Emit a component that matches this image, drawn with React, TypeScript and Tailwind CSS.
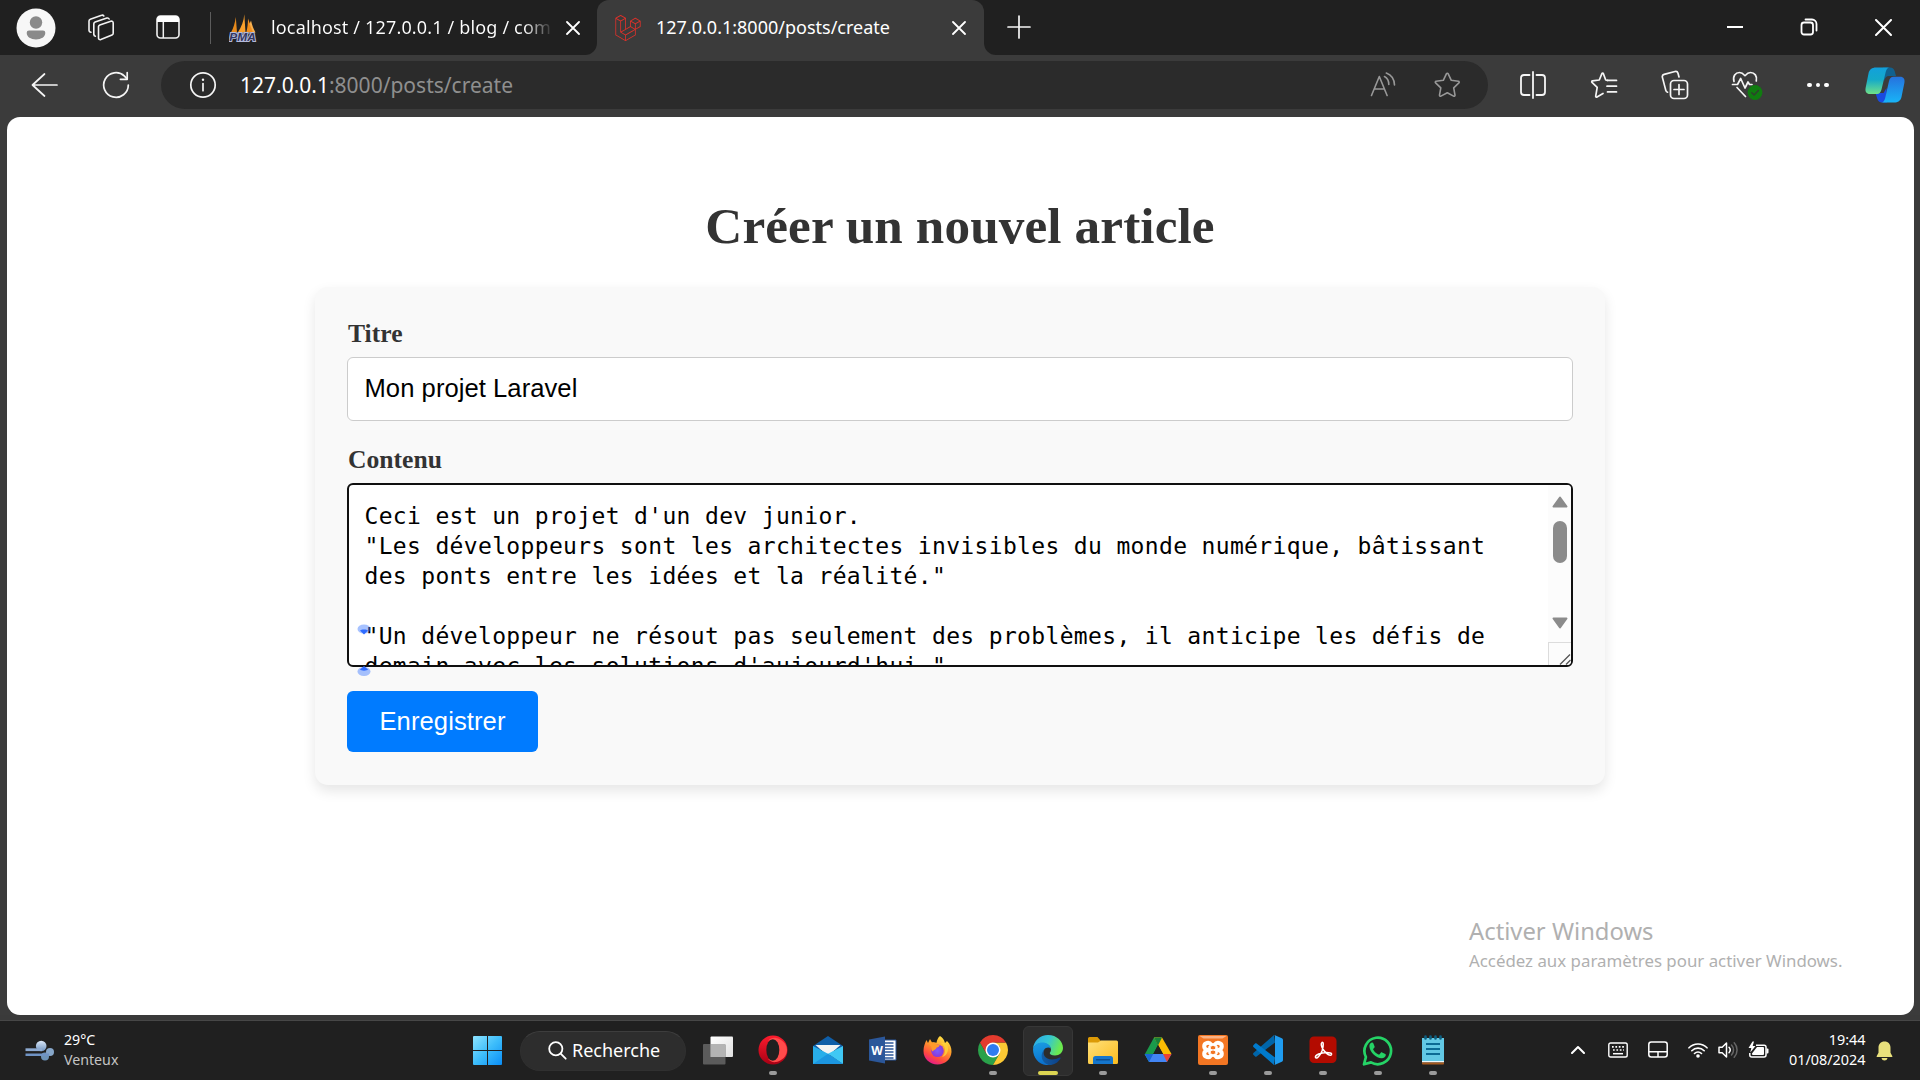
import type { ReactNode } from 'react';
import { SiLaravel } from 'react-icons/si';

const ui = "font-['Noto_Sans','Open_Sans',sans-serif]";

function Slot({ className, children }: { className: string; children: ReactNode }) {
  return <div className={`flex shrink-0 items-center justify-center ${className}`}>{children}</div>;
}

/* ---------- Browser icons ---------- */

const Avatar = () => (
  <svg width="40" height="40" viewBox="0 0 40 40">
    <circle cx="20" cy="20" r="19.5" fill="#f7f7f7" />
    <circle cx="20" cy="14.5" r="6.2" fill="#8a8a8a" />
    <path d="M13 22.5h14a2.3 2.3 0 0 1 2.3 2.3c0 4.200-4 6.600-9.300 6.600s-9.300-2.400-9.300-6.600A2.300 2.300 0 0 1 13 22.500z" fill="#8a8a8a" />
  </svg>
);

const Workspaces = () => (
  <svg width="28" height="28" viewBox="0 0 28 28" fill="none" stroke="#f2f2f2" strokeWidth="1.6" strokeLinejoin="round" strokeLinecap="round">
    <path d="M11.500 12.600a2 2 0 0 1 1.300-1.700l11-3.700a1.800 1.800 0 0 1 2.400 1.700v10.300a2 2 0 0 1-1.200 1.800l-11.200 4.600a1.700 1.700 0 0 1-2.300-1.600z" />
    <path d="M8.400 22.200a1.900 1.900 0 0 1-1.600-1.800V9.900a2 2 0 0 1 1.300-1.800l11.800-4a1.800 1.800 0 0 1 2.200.9" />
    <path d="M4 18.200a1.900 1.900 0 0 1-2-1.900V7a2 2 0 0 1 1.300-1.800L14.600 1.300a1.800 1.800 0 0 1 2.200.7" />
  </svg>
);

const TabActions = () => (
  <svg width="24" height="24" viewBox="0 0 24 24" fill="none">
    <rect x="1" y="1" width="22" height="22" rx="3.500" stroke="#f2f2f2" strokeWidth="1.600" />
    <path d="M1 7V4.500A3.500 3.500 0 0 1 4.500 1h15A3.500 3.500 0 0 1 23 4.500V7z" fill="#fff" />
    <path d="M7.300 7v16" stroke="#f2f2f2" strokeWidth="1.500" />
  </svg>
);

const PhpMyAdmin = () => (
  <svg width="28" height="28" viewBox="0 0 28 28">
    <path d="M2 18.500C4.500 14 6 9 6.800 3L8 18.500z" fill="#e88b1c" />
    <path d="M8.800 18.500C12.500 13 14.800 7 15.300 0.300L16.500 18.500z" fill="#f9a02c" />
    <path d="M17.300 18.500C18.500 14 19 9 19 4.500c2 5 3.500 9.500 5.500 14z" fill="#f28d1a" />
    <path d="M20.500 10 22 6.500c1 4.500 2.500 8.500 4.500 12h-2.500z" fill="#f9b04e" />
    <path d="M1 18.400h25l-2 1.200H2z" fill="#b5bdd6" />
    <text x="0.300" y="27" fontSize="10.500" fontStyle="italic" fontWeight="bold" fontFamily="Liberation Sans, sans-serif" textLength="26.500" lengthAdjust="spacingAndGlyphs" fill="#33365f" stroke="#b4badb" strokeWidth="1.800" paintOrder="stroke">PMA</text>
  </svg>
);

const Cross = ({ s, w = 1.8 }: { s: number; w?: number }) => (
  <svg width={s} height={s} viewBox={`0 0 ${s} ${s}`} stroke="#fff" strokeWidth={w} strokeLinecap="round">
    <path d={`M1 1 ${s - 1} ${s - 1}M${s - 1} 1 1 ${s - 1}`} />
  </svg>
);

const Plus = () => (
  <svg width="24" height="24" viewBox="0 0 24 24" stroke="#f5f5f5" strokeWidth="1.700" strokeLinecap="round">
    <path d="M12 1v22M1 12h22" />
  </svg>
);

const Restore = () => (
  <svg width="18" height="18" viewBox="0 0 18 18" fill="none" stroke="#fff" strokeWidth="1.800">
    <rect x="1.500" y="4.500" width="11.500" height="12" rx="2.500" />
    <path d="M5.500 1.500h6.500a4.500 4.500 0 0 1 4.500 4.500v6.500" strokeLinecap="round" />
  </svg>
);

const Back = () => (
  <svg width="28" height="26" viewBox="0 0 28 26" fill="none" stroke="#f5f5f5" strokeWidth="1.700" strokeLinecap="round" strokeLinejoin="round">
    <path d="M13.500 2 1.500 13l12 11M1.500 13H26" />
  </svg>
);

const Reload = () => (
  <svg width="28" height="28" viewBox="0 0 28 28" fill="none" stroke="#f5f5f5" strokeWidth="1.700" strokeLinecap="round" strokeLinejoin="round">
    <path d="M26.300 14A12.300 12.300 0 1 1 22.500 5.100L25 7.900" />
    <path d="M25.200 1.500v6.800h-6.800" />
  </svg>
);

const Info = () => (
  <svg width="28" height="28" viewBox="0 0 28 28" fill="none" stroke="#f5f5f5">
    <circle cx="14" cy="14" r="12.200" strokeWidth="1.700" />
    <path d="M14 12.500v7.200" strokeWidth="1.700" strokeLinecap="round" />
    <circle cx="14" cy="8.700" r="1.200" fill="#f5f5f5" stroke="none" />
  </svg>
);

const ReadAloud = () => (
  <svg width="26" height="26" viewBox="0 0 26 26" fill="none" stroke="#989898" strokeWidth="1.600" strokeLinecap="round" strokeLinejoin="round">
    <path d="M1.500 23.500 9.300 4.500l7.800 19M4.200 17h10.200" />
    <path d="M14.500 4.500c2.800 1.500 4.300 4.500 4.300 8M16.300 1c4.800 1.800 8 6.200 8.200 12" />
  </svg>
);

const STAR = 'M13.500 2.200c.3-.7 1.300-.7 1.600 0l3.200 6.600 7.100 1c.8.100 1.100 1.100.5 1.600l-5.200 5 1.300 7.200c.1.800-.7 1.400-1.400 1L14.300 21.200 7.900 24.600c-.7.400-1.500-.2-1.400-1l1.300-7.200-5.200-5c-.6-.5-.3-1.500.5-1.600l7.200-1z';

const Star = () => (
  <svg width="28" height="28" viewBox="0 0 28 27" fill="none" stroke="#989898" strokeWidth="1.600" strokeLinejoin="round">
    <path d={STAR} />
  </svg>
);

const Split = () => (
  <svg width="26" height="28" viewBox="0 0 26 28" fill="none" stroke="#f5f5f5" strokeWidth="1.800" strokeLinecap="round">
    <path d="M9.500 4H4a3 3 0 0 0-3 3v14a3 3 0 0 0 3 3h5.500M16.500 4H22a3 3 0 0 1 3 3v14a3 3 0 0 1-3 3h-5.500M13 1v26" />
  </svg>
);

const Favorites = () => (
  <svg width="28" height="28" viewBox="0 0 28 28" fill="none" stroke="#f5f5f5" strokeWidth="1.700" strokeLinecap="round" strokeLinejoin="round">
    <path d="M17.500 9.300 15.700 9l-2.300-6.300c-.3-.7-1.200-.7-1.500 0L9.300 9 2.500 9.900c-.8.100-1 1-.5 1.500l5.200 5-1.500 8.700c-.1.800.7 1.300 1.300.9L13 22.500" />
    <path d="M17.500 9.400H26.500M17 15.200h9.500M17.500 20.900H26.500" />
  </svg>
);

const Collections = () => (
  <svg width="28" height="30" viewBox="0 0 28 30" fill="none" stroke="#f5f5f5" strokeWidth="1.700" strokeLinecap="round" strokeLinejoin="round">
    <rect x="9.500" y="10.500" width="17" height="18" rx="3.500" />
    <path d="M18 14.500v10M13 19.500h10" />
    <path d="M6.500 22.200a2.500 2.500 0 0 1-1.700-1.800L1.400 7.400a2.500 2.500 0 0 1 1.700-3L14 1.500a2.500 2.500 0 0 1 3 1.700l1 3.800" />
  </svg>
);

const Essentials = () => (
  <svg width="32" height="32" viewBox="0 0 32 32" fill="none" stroke="#f5f5f5" strokeWidth="1.700" strokeLinecap="round" strokeLinejoin="round">
    <path d="M3 12.500C1.500 7 4.500 3.500 8.500 3.500c2.500 0 4 1.500 5.500 3.200 1.500-1.700 3-3.200 5.500-3.200 4 0 7 3.500 5.800 8.500M6 18.500l8.500 9" />
    <path d="M1.500 15.500h5l3.200-6 4.300 9.500 3-6 1.500 2.500H21" />
    <circle cx="24" cy="23.500" r="7.400" fill="#107c10" stroke="none" />
    <path d="m20.800 23.700 2.300 2.300 4.300-4.500" stroke="#2f3f2f" strokeWidth="1.500" />
  </svg>
);

const Copilot = () => (
  <svg width="40" height="36" viewBox="0 0 40 36">
    <defs>
      <linearGradient id="cpA" x1="0" y1="0" x2="0" y2="1"><stop offset="0" stopColor="#12a0dc" /><stop offset=".45" stopColor="#14a9c9" /><stop offset="1" stopColor="#6fe08a" /></linearGradient>
      <linearGradient id="cpB" x1="0" y1="0" x2="0" y2="1"><stop offset="0" stopColor="#2672de" /><stop offset="1" stopColor="#18b4f7" /></linearGradient>
    </defs>
    <path d="M18 .500h7c2.500 0 4 1.500 4.800 4L31 9h-7c-3 0-4 2-5 5z" fill="#11618f" />
    <path d="M22 35.500h-5c-2.500 0-4-1.500-4.800-4L10.500 26h8l3-5z" fill="#1a4be0" />
    <path d="M11 .500h14c-2.500 0-3.600 2-4.300 4.500l-4.200 17.500c-.700 2.500-2 4.500-4.500 4.500H5c-3.800 0-5-2.500-4.400-6L3.500 6.500C4.300 2.500 7 .500 11 .500z" fill="url(#cpA)" />
    <path d="M29 35.500H16c2.500 0 3.500-2 4.200-4.500l3.700-16.500c.600-3 2.100-4.800 4.600-4.800H35c3.800 0 5 2.500 4.400 6L36.500 30c-.800 3.700-3.500 5.500-7.500 5.500z" fill="url(#cpB)" />
  </svg>
);

/* ---------- Taskbar icons ---------- */

const Wind = () => (
  <svg width="30" height="22" viewBox="0 0 30 22">
    <defs><linearGradient id="wd" x1="0" y1="0" x2="0" y2="1"><stop offset="0" stopColor="#dbe8f8" /><stop offset="1" stopColor="#6e93c0" /></linearGradient></defs>
    <circle cx="20" cy="16.500" r="4" fill="#6d93b8" />
    <circle cx="25" cy="12" r="4" fill="#86a6c9" />
    <path d="M.500 13.500H24v2.500H.500z" fill="#6f93c4" />
    <circle cx="16.200" cy="6" r="5.300" fill="url(#wd)" />
    <path d="M.500 8.300H17v2.800H.500z" fill="#8eabd2" />
  </svg>
);

const Start = () => (
  <svg width="29" height="29" viewBox="0 0 29 29">
    <defs><linearGradient id="st" gradientUnits="userSpaceOnUse" x1="0" y1="0" x2="29" y2="29"><stop offset="0" stopColor="#8ee4ff" /><stop offset=".5" stopColor="#3dbdfb" /><stop offset="1" stopColor="#0a8df5" /></linearGradient></defs>
    <path d="M1 0h13v14H0V1a1 1 0 0 1 1-1zM15 0h13a1 1 0 0 1 1 1v13H15zM0 15h14v14H1a1 1 0 0 1-1-1zM15 15h14v13a1 1 0 0 1-1 1H15z" fill="url(#st)" />
  </svg>
);

const TaskView = () => (
  <svg width="30" height="29" viewBox="0 0 30 29">
    <defs><linearGradient id="tv" x1="0" y1="0" x2="1" y2="1"><stop offset="0" stopColor="#fff" /><stop offset="1" stopColor="#e0e0e0" /></linearGradient></defs>
    <rect x="7.500" y="0.500" width="22.500" height="20.500" rx="1" fill="url(#tv)" />
    <rect x="0" y="8" width="22.500" height="20.500" rx="1" fill="#666" fillOpacity=".85" />
    <path d="M7.500 8h14.500v13H7.500z" fill="#b3b3b3" />
  </svg>
);

const Opera = () => (
  <svg width="30" height="30" viewBox="0 0 30 30">
    <defs><linearGradient id="op" x1="0" y1="0" x2="0" y2="1"><stop offset="0" stopColor="#ff1b2d" /><stop offset="1" stopColor="#a70014" /></linearGradient></defs>
    <circle cx="15" cy="15" r="14.500" fill="url(#op)" />
    <path d="M10 5.800C12 3.600 15 2.300 18 3c6 1 11 6 11 12s-5 11-11 12c-3 .600-6-.800-8-3 8 3 11-3 11-9s-3-12-11-9.200z" fill="#ff4b4b" />
    <ellipse cx="14.800" cy="15" rx="6.500" ry="10.800" fill="#202020" />
  </svg>
);

const Mail = () => (
  <svg width="30" height="28" viewBox="0 0 30 28">
    <path d="M0 10 15 0l15 10v4H0z" fill="#0f5ea8" />
    <path d="M2.500 9h25L15 20z" fill="#f3f3f3" />
    <path d="M0 10v18h30L15 17.800z" fill="#28aeea" />
    <path d="M30 10v18L15 17.800z" fill="#40c8f4" />
    <path d="M0 28 15 17.800 30 28z" fill="#1c96e0" />
  </svg>
);

const Word = () => (
  <svg width="28" height="28" viewBox="0 0 28 28">
    <path d="M14 4h13v20H14z" fill="#fff" stroke="#2b579a" strokeWidth="1" />
    <path d="M15 7h9.500M15 10h9.500M15 13h9.500M15 16h9.500M15 19h9.500M15 22h9.500" stroke="#2b579a" strokeWidth="1.400" />
    <path d="M0 3.500 16 .500v27L0 24.500z" fill="#2b579a" />
    <text x="8" y="18.500" textAnchor="middle" fontSize="12" fontWeight="bold" fontFamily="Open Sans, sans-serif" fill="#fff">W</text>
  </svg>
);

const Firefox = () => (
  <svg width="29" height="30" viewBox="0 0 29 30">
    <defs>
      <linearGradient id="ff" x1=".8" y1="0" x2=".3" y2="1"><stop offset="0" stopColor="#fff14a" /><stop offset=".4" stopColor="#ffa02b" /><stop offset=".75" stopColor="#ff4a3f" /><stop offset="1" stopColor="#e3188e" /></linearGradient>
      <radialGradient id="fp"><stop offset="0" stopColor="#7a5cff" /><stop offset="1" stopColor="#8c38d6" /></radialGradient>
    </defs>
    <path d="M17 1c3 2 4.500 4.500 5 7l2-2c3 3 4.700 6.500 4.500 11C28 24.500 22 29.500 14.500 29.500S.500 24 .500 16c0-4.500 1.500-8 3-11l1.500 3 2-4 2 3.500c1.500-.500 3-.500 4.500.200C14 5 15 2.500 17 1z" fill="url(#ff)" />
    <circle cx="14.500" cy="15.800" r="6.300" fill="url(#fp)" />
    <path d="M5.500 8.500c3-1.500 6-1 8 .700l3 .800c.500 1.200-1 2.200-2.800 2.500-1 2.500-2.800 2-4.200 4-1-1-1.500-2.800-1-4.500z" fill="#ff9a2b" />
    <path d="M18 8c5 3 5.500 10 1 14 6-1.500 8-9 4-14z" fill="#ffd43a" opacity=".8" />
  </svg>
);

const Chrome = () => (
  <svg width="30" height="30" viewBox="0 0 30 30">
    <path d="M2.010 7.500A15 15 0 0 0 15 30l6.500-11.250L15 15 8.500 18.750z" fill="#2aa14a" />
    <path d="M27.990 7.500A15 15 0 0 1 15 30l6.500-11.250L21.500 11.250 15 7.500z" fill="#fcc934" />
    <path d="M15 0A15 15 0 0 0 2.010 7.500l6.500 11.250L15 7.500h12.990A15 15 0 0 0 15 0z" fill="#e33b2e" />
    <circle cx="15" cy="15" r="7.500" fill="#fff" />
    <circle cx="15" cy="15" r="6" fill="#2f7cf0" />
  </svg>
);

const Edge = () => (
  <svg width="30" height="30" viewBox="0 0 30 30">
    <defs>
      <linearGradient id="ea" x1="0" y1="0" x2="1" y2=".3"><stop offset="0" stopColor="#2aa8ea" /><stop offset=".55" stopColor="#35c6d2" /><stop offset="1" stopColor="#6bea4e" /></linearGradient>
      <linearGradient id="eb" x1="0" y1="0" x2=".2" y2="1"><stop offset="0" stopColor="#1b9de2" /><stop offset="1" stopColor="#0b72cf" /></linearGradient>
      <linearGradient id="ec" x1="0" y1="0" x2="1" y2="0"><stop offset="0" stopColor="#135ea5" /><stop offset="1" stopColor="#0c3f86" /></linearGradient>
    </defs>
    <path d="M0 14C.500 6 7 0 15 0c9 0 15 6.500 15 13 0 4.500-3.500 7.500-8 7.500-3.500 0-5.200-1-5.200-2.200 0-1 1.200-1.500 1.200-3.800C18 11 14 8 9.500 8 5 8 1.500 10.500 0 14z" fill="url(#ea)" />
    <path d="M0 14c1.500-4.500 5-6.500 9.500-6.500 4 0 8 2.500 8.300 6-1.500-1.500-5-1.500-6.800 1.500-3 5 0 12.500 6 14.800C8 31.500 0 24.500 0 14z" fill="url(#eb)" />
    <path d="M11.500 14.500C9 19 12 24.500 19 24.500c3 0 5.500-.800 7.500-2 .800-.400 1.400.400.900 1.200C25 27.500 21 30 16.500 30 10 29 5.500 20.500 11.500 14.500z" fill="url(#ec)" />
  </svg>
);

const Explorer = () => (
  <svg width="30" height="27" viewBox="0 0 30 27">
    <defs><linearGradient id="ex" x1="0" y1="0" x2="1" y2="1"><stop offset="0" stopColor="#ffe07a" /><stop offset="1" stopColor="#fbbc1e" /></linearGradient></defs>
    <path d="M0 1.500A1.500 1.500 0 0 1 1.500 0h8l3 3.500V8H0z" fill="#dc9a06" />
    <path d="M0 5.500h10l3-2h15.500A1.500 1.500 0 0 1 30 5v20.500A1.500 1.500 0 0 1 28.500 27h-27A1.500 1.500 0 0 1 0 25.500z" fill="url(#ex)" />
    <path d="M5 27v-5.500A2.500 2.500 0 0 1 7.500 19h15a2.500 2.500 0 0 1 2.500 2.500V27z" fill="#1576cc" />
    <path d="M8.500 22.800h13" stroke="#0c4f92" strokeWidth="1.400" strokeLinecap="round" />
  </svg>
);

const Drive = () => (
  <svg width="28" height="26" viewBox="0 0 28 26">
    <path d="M10 .500h8L9.300 17 5 25 .700 17.500z" fill="#1a9a4b" />
    <path d="M18 .500 27.500 17H19L10 .500z" fill="#fbbc04" />
    <path d="M10 .500h8l-4 8z" fill="#188038" />
    <path d="M5.300 25 .700 17H27.500l-4.700 8z" fill="#4285f4" />
    <path d="M.700 17h8.600L5 25z" fill="#1967d2" />
    <path d="M19 17h8.500L23 25z" fill="#ea4335" />
    <path d="M14 8l-4.700 9H19z" fill="#202020" />
  </svg>
);

const Xampp = () => (
  <svg width="30" height="30" viewBox="0 0 30 30">
    <rect width="30" height="30" rx="2" fill="#f37623" />
    <path d="M1.500 1h27l-4 2.500h-19z" fill="#f9b285" />
    <path d="M13 9.500c-1.500-2.700-6.800-2-6.800 1.700 0 2.600 1.600 3.300 3.300 3.800-1.700.500-3.300 1.200-3.300 3.800 0 3.700 5.300 4.400 6.800 1.700M17 9.500c1.500-2.700 6.800-2 6.800 1.700 0 2.600-1.600 3.300-3.300 3.800 1.700.500 3.300 1.200 3.300 3.800 0 3.700-5.300 4.400-6.800 1.700" fill="none" stroke="#fff" strokeWidth="4" strokeLinecap="round" />
    <path d="M12.500 9.500h5M12.500 20.500h5M11.500 12v6M18.500 12v6" stroke="#fff" strokeWidth="2.600" strokeLinecap="round" />
  </svg>
);

const VSCode = () => (
  <svg width="30" height="30" viewBox="0 0 30 30">
    <path d="M22 7.500 3.600 21.400c-.500.400-1.100.300-1.500 0L.400 19.800c-.500-.500-.500-1.200 0-1.700L21 0z" fill="#0065a9" />
    <path d="M22 22.500 3.600 8.600c-.500-.400-1.100-.300-1.500 0L.400 10.200c-.500.500-.500 1.200 0 1.700L21 30z" fill="#007acc" />
    <path d="M21.500 0l7.300 3.200c.700.300 1.200 1 1.200 1.800v20c0 .800-.500 1.500-1.200 1.800L21.500 30c-.600.100-1.100 0-1.500-.300.800.500 2 .100 2-1V1.300c0-1-1.200-1.500-2-1 .500-.300.900-.400 1.500-.300z" fill="#1f9cf0" />
  </svg>
);

const Acrobat = () => (
  <svg width="28" height="28" viewBox="0 0 28 28">
    <rect x=".5" y=".5" width="27" height="26.500" rx="4.500" fill="#b30b00" />
    <path d="M6.500 21.500c-.8-2.500 5.500-5 11-5 3 0 5.500.5 5 2-.8 2-5.500-.5-8-4.500-1.700-2.800-2.800-6.500-1.500-7.500 1.700-1 1.500 3.500.2 8-1.300 4-5.500 9.300-6.700 7z" fill="none" stroke="#fff" strokeWidth="1.500" strokeLinejoin="round" />
  </svg>
);

const WhatsApp = () => (
  <svg width="31" height="31" viewBox="0 0 31 31">
    <path d="M2 29.300 3.900 22A13.300 13.300 0 1 1 9 27.400z" fill="#202020" stroke="#25d366" strokeWidth="2.700" strokeLinejoin="round" />
    <path d="M11.400 8.500c-.5-1-1-.9-1.600-.9-1.200.2-2.500 1.700-2.400 3.800.3 5.500 7 12 12.300 11.900 2.300-.1 4-1.500 4.100-3 0-.8 0-1-.5-1.300l-3.200-1.600c-.5-.2-.9-.2-1.300.3l-1.200 1.500c-.3.400-.7.400-1.200.2-2.300-1-4-2.700-5.100-4.700-.3-.5 0-.8.3-1.100l.9-1.200c.2-.4.200-.7 0-1.100z" fill="#25d366" />
  </svg>
);

const Notepad = () => (
  <svg width="22" height="30" viewBox="0 0 22 30">
    <path d="M0 3h22v24H0z" fill="#62c8e4" />
    <path d="M0 26h22v1.500H0z" fill="#eef7fa" />
    <path d="M0 27.500h22v1.300a.8.800 0 0 1-.8.800H.8a.8.800 0 0 1-.8-.8z" fill="#a65a1e" />
    <path d="M4 9h14M4 14h14M4 19h14" stroke="#0b6a94" strokeWidth="1.900" />
    <path d="M3.500 1.500v2M8.500 1.500v2M13.500 1.500v2M18.500 1.500v2" stroke="#0d5f80" strokeWidth="2.600" strokeLinecap="round" />
  </svg>
);

const Apps: { icon: ReactNode; open?: boolean; active?: boolean }[] = [
  { icon: <TaskView /> },
  { icon: <Opera />, open: true },
  { icon: <Mail /> },
  { icon: <Word /> },
  { icon: <Firefox /> },
  { icon: <Chrome />, open: true },
  { icon: <Edge />, active: true },
  { icon: <Explorer />, open: true },
  { icon: <Drive /> },
  { icon: <Xampp />, open: true },
  { icon: <VSCode />, open: true },
  { icon: <Acrobat />, open: true },
  { icon: <WhatsApp />, open: true },
  { icon: <Notepad />, open: true },
];

function TabBar() {
  return (
    <div className={`flex h-[55px] shrink-0 bg-[#3b3b3b] text-[18px] text-white ${ui}`}>
      <div className="flex h-full w-[597px] items-center rounded-br-[12px] bg-[#202020]">
        <Slot className="w-[71px]"><Avatar /></Slot>
        <Slot className="w-[59px]"><Workspaces /></Slot>
        <Slot className="w-[75px] pb-px"><TabActions /></Slot>
        <div className="ml-[5px] h-8 w-px bg-[#5c5c5c]" />
        <div className="ml-[18px]"><PhpMyAdmin /></div>
        <div className="ml-[14px] w-[281px] overflow-hidden whitespace-nowrap bg-linear-to-r from-white from-90% to-[#303030] bg-clip-text tracking-[0.16px] text-transparent">
          localhost / 127.0.0.1 / blog / com
        </div>
        <div className="ml-[14px]"><Cross s={14} /></div>
      </div>
      <div className="flex h-full w-[387px] bg-[#202020]">
        <div className="flex h-full w-full items-center rounded-t-[12px] bg-[#3b3b3b]">
          <SiLaravel className="ml-[18px] size-[26px] text-[#e0312a]" />
          <div className="ml-[15px] w-[296px] whitespace-nowrap">127.0.0.1:8000/posts/create</div>
          <Cross s={14} />
        </div>
      </div>
      <div className="flex h-full flex-1 items-center rounded-bl-[12px] bg-[#202020]">
        <Slot className="w-[69px] pb-[2px]"><Plus /></Slot>
        <div className="flex-1" />
        <Slot className="w-[74px] pb-px"><div className="h-[2px] w-4 bg-white" /></Slot>
        <Slot className="w-[74px] pb-px"><Restore /></Slot>
        <Slot className="w-[74px] pb-px"><Cross s={17} w={2} /></Slot>
      </div>
    </div>
  );
}

function Toolbar() {
  return (
    <div className={`flex h-[62px] shrink-0 items-center bg-[#3b3b3b] pb-[2px] ${ui}`}>
      <Slot className="w-[90px]"><Back /></Slot>
      <Slot className="w-[52px]"><Reload /></Slot>
      <div className="ml-[19px] flex h-12 w-[1327px] items-center rounded-full bg-[#2b2b2b] pl-7">
        <Info />
        <div className="ml-[23px] whitespace-nowrap pt-px text-[21px] text-[#8f8f8f]">
          <span className="text-white">127.0.0.1</span>:8000/posts/create
        </div>
        <div className="flex-1" />
        <Slot className="w-[64px]"><ReadAloud /></Slot>
        <Slot className="mr-[9px] w-[64px]"><Star /></Slot>
      </div>
      <Slot className="ml-[9px] w-[71.500px]"><Split /></Slot>
      <Slot className="w-[71.500px]"><Favorites /></Slot>
      <Slot className="w-[70.500px]"><Collections /></Slot>
      <Slot className="w-[72px]"><Essentials /></Slot>
      <Slot className="w-[70.500px] gap-1">
        <div className="size-[4.500px] rounded-full bg-white" />
        <div className="size-[4.500px] rounded-full bg-white" />
        <div className="size-[4.500px] rounded-full bg-white" />
      </Slot>
      <Slot className="w-[64px]"><Copilot /></Slot>
    </div>
  );
}

function ContentBox() {
  return (
    <div className="relative mt-[9px] h-[184px] w-full rounded-[6px] border-[2.500px] border-[#101010] bg-white">
      <div className="h-full overflow-hidden whitespace-pre pl-[15.500px] pt-[16px] font-['DejaVu_Sans_Mono',monospace] text-[23px] leading-[30px] tracking-[0.34px] text-black">
        {`Ceci est un projet d'un dev junior.
"Les développeurs sont les architectes invisibles du monde numérique, bâtissant
des ponts entre les idées et la réalité."

"Un développeur ne résout pas seulement des problèmes, il anticipe les défis de
demain avec les solutions d'aujourd'hui."`}
      </div>
      <div className="absolute inset-y-0 right-0 flex w-[23px] flex-col items-center rounded-r-[4px] bg-[#fcfcfc]">
        <svg className="mt-[11px]" width="16" height="12" viewBox="0 0 16 12"><path d="M8 1.500 14.500 10.500h-13z" fill="#8b8b8b" stroke="#8b8b8b" strokeWidth="2" strokeLinejoin="round" /></svg>
        <div className="mt-[13px] h-[42px] w-[14px] rounded-full bg-[#8b8b8b]" />
        <svg className="mt-[54px]" width="16" height="12" viewBox="0 0 16 12"><path d="M8 10.500 14.500 1.500h-13z" fill="#8b8b8b" stroke="#8b8b8b" strokeWidth="2" strokeLinejoin="round" /></svg>
        <div className="mt-auto flex h-[23px] w-full items-end justify-end border-l border-t border-[#dcdcdc]">
          <svg width="12" height="12" viewBox="0 0 12 12" stroke="#555" strokeWidth="1.300"><path d="M1 11.500 11 1.500M7 11.500l4.500-4.500" /></svg>
        </div>
      </div>
      <svg className="absolute left-[8px] top-[139px]" width="14" height="12" viewBox="0 0 14 12">
        <ellipse cx="7" cy="5" rx="6.500" ry="4.500" fill="#3b78ff" fillOpacity=".45" />
        <path d="M3 6.500c1-1.500 7-1.500 8 0L7 10.500z" fill="#2f6bff" />
      </svg>
      <svg className="absolute left-[8px] top-[180px]" width="14" height="12" viewBox="0 0 14 12">
        <ellipse cx="7" cy="6.500" rx="6.500" ry="4.500" fill="#3b78ff" fillOpacity=".45" />
        <path d="M3 4.500c1 1.500 7 1.500 8 0L7 1z" fill="#2f6bff" />
      </svg>
    </div>
  );
}

function ArticlePage() {
  return (
    <main className="relative ml-[7px] mr-[6px] flex h-[898px] shrink-0 flex-col items-center overflow-hidden rounded-[13px] bg-white pr-px">
      <h1 className="mt-[79px] font-['Liberation_Serif',serif] text-[51.200px] font-bold leading-[60px] tracking-[0.12px] text-[#333]">Créer un nouvel article</h1>
      <section className="mt-[31px] flex h-[498px] w-[1290px] flex-col items-start rounded-[13px] bg-[#f9f9f9] px-8 pt-[33px] shadow-[0_6px_13px_rgba(0,0,0,0.1)]">
        <label className="ml-px font-['Liberation_Serif',serif] text-[25.600px] font-bold leading-[28px] text-[#333]">Titre</label>
        <div className="mt-[9px] flex h-[64px] w-full items-center rounded-[6px] border border-[#ccc] bg-white pb-px pl-[16.500px] font-['Liberation_Sans',sans-serif] text-[25.600px] tracking-[0.05px] text-black">Mon projet Laravel</div>
        <label className="ml-px mt-[25px] font-['Liberation_Serif',serif] text-[25.600px] font-bold leading-[28px] text-[#333]">Contenu</label>
        <ContentBox />
        <button className="mt-[24px] h-[61px] w-[191px] rounded-[6px] bg-[#007bff] font-['Liberation_Sans',sans-serif] text-[25.600px] tracking-[0.08px] text-white">Enregistrer</button>
      </section>
      <div className={`absolute left-[1462px] top-[798px] whitespace-nowrap text-[#b0b0b0] ${ui}`}>
        <div className="text-[23.800px] leading-[32px]">Activer Windows</div>
        <div className="text-[16.850px] leading-[28px]">Accédez aux paramètres pour activer Windows.</div>
      </div>
    </main>
  );
}

function Taskbar() {
  return (
    <div className={`flex h-[60px] shrink-0 items-center border-t border-[#474747] bg-[#202020] text-white ${ui}`}>
      <div className="flex w-[448px] items-center pl-[25px]">
        <Wind />
        <div className="ml-[9px] pb-[2px] text-[14.200px] leading-5">
          <div>29°C</div>
          <div className="text-[#c4c4c4]">Venteux</div>
        </div>
      </div>
      <Slot className="w-[79px]"><Start /></Slot>
      <div className="-ml-[7px] flex h-10 w-[166px] items-center rounded-full border border-[#303030] border-t-[#3d3d3d] bg-[#2d2d2d] pl-[27px]">
        <svg width="19" height="19" viewBox="0 0 19 19" fill="none" stroke="#fff" strokeWidth="1.800" strokeLinecap="round"><circle cx="7.800" cy="7.800" r="6.600" /><path d="m12.700 12.700 5 5" /></svg>
        <div className="ml-[5px] pb-px text-[18px]">Recherche</div>
      </div>
      <div className="ml-[4px] flex">
        {Apps.map((app, i) => (
          <div key={i} className="flex w-[55px] justify-center">
            <div className={`flex h-[50px] w-[50px] flex-col items-center rounded-[6px] border ${app.active ? 'border-[#373737] bg-[#2d2d2d]' : 'border-transparent'}`}>
              <div className="flex h-[44px] items-center pt-[3px]">{app.icon}</div>
              {app.open && <div className="h-[4px] w-2 shrink-0 rounded-full bg-[#9a9a9a]" />}
              {app.active && <div className="h-[4px] w-5 shrink-0 rounded-full bg-[#dcd552]" />}
            </div>
          </div>
        ))}
      </div>
      <div className="flex flex-1 items-center justify-end pb-[2px] pr-[27px]">
        <svg width="14" height="9" viewBox="0 0 14 9" fill="none" stroke="#fff" strokeWidth="2" strokeLinecap="round" strokeLinejoin="round"><path d="m1 8 6-6 6 6" /></svg>
        <svg className="ml-[23px]" width="20" height="16" viewBox="0 0 20 16" fill="none" stroke="#fff">
          <rect x=".8" y="1" width="18.400" height="14" rx="1.800" strokeWidth="1.400" />
          <path d="M4 4.800h12.500M5 8h11" strokeWidth="1.700" strokeDasharray="1.700 1.700" />
          <path d="M5 11.700h10" strokeWidth="1.500" />
        </svg>
        <svg className="ml-[20px]" width="20" height="17" viewBox="0 0 20 17" fill="none" stroke="#fff" strokeWidth="1.500">
          <rect x=".8" y="1" width="18.400" height="15" rx="2.500" />
          <path d="M1 10.800h18M10 10.800V16" />
        </svg>
        <svg className="ml-[20px]" width="20" height="16" viewBox="0 0 20 16" fill="none" stroke="#fff" strokeWidth="1.600" strokeLinecap="round">
          <path d="M1 5.800a12.500 12.500 0 0 1 18 0M3.800 8.700a8.800 8.800 0 0 1 12.400 0M6.500 11.500a5 5 0 0 1 7 0" />
          <circle cx="10" cy="14" r="1.800" fill="#fff" stroke="none" />
        </svg>
        <svg className="ml-[10px]" width="21" height="18" viewBox="0 0 21 18" fill="none" strokeWidth="1.500" strokeLinecap="round" strokeLinejoin="round">
          <path d="M1 6.200h3.200L8.500 2v14l-4.300-4.200H1z" stroke="#fff" />
          <path d="M11 6.300a4 4 0 0 1 0 5.400" stroke="#fff" />
          <path d="M13.500 4a7.200 7.200 0 0 1 0 10M16.200 1.800a10.500 10.500 0 0 1 0 14.400" stroke="#666" />
        </svg>
        <svg className="ml-[9px]" width="21" height="18" viewBox="0 0 21 18">
          <path d="M8 4.200h8.200A1.800 1.800 0 0 1 18 6v8a2 2 0 0 1-2 2H3.800a2 2 0 0 1-2-2V12" fill="none" stroke="#fff" strokeWidth="1.500" />
          <path d="M9 6h6a1 1 0 0 1 1 1v6a1 1 0 0 1-1 1H5a1 1 0 0 1-1-1v-.500z" fill="#fff" />
          <path d="M18.500 7.500h1a1 1 0 0 1 1 1v3a1 1 0 0 1-1 1h-1z" fill="#fff" />
          <path d="M4.500.500.500 7h2.800l-1 4.500L7.500 5H4.700L6 .500z" fill="#fff" />
        </svg>
        <div className="ml-[20px] text-right text-[14.400px] leading-5">
          <div>19:44</div>
          <div>01/08/2024</div>
        </div>
        <svg className="ml-[10.500px] mt-[2px]" width="17" height="20" viewBox="0 0 17 20" fill="#e8e07c">
          <path d="M8.500.500c3.800 0 6 2.700 6 6v5.200l1.900 3.500c.200.500 0 .800-.500.800H1.100c-.500 0-.700-.300-.500-.800l1.900-3.500V6.500c0-3.300 2.200-6 6-6z" />
          <path d="M5.500 17h6c-.300 1.700-1.500 2.500-3 2.500s-2.700-.800-3-2.500z" />
        </svg>
      </div>
    </div>
  );
}

export default function App() {
  return (
    <div className="flex h-[1080px] w-[1920px] flex-col overflow-hidden bg-[#3b3b3b]">
      <TabBar />
      <Toolbar />
      <ArticlePage />
      <div className="h-[5px] shrink-0 bg-[#3a3a3a]" />
      <Taskbar />
    </div>
  );
}
